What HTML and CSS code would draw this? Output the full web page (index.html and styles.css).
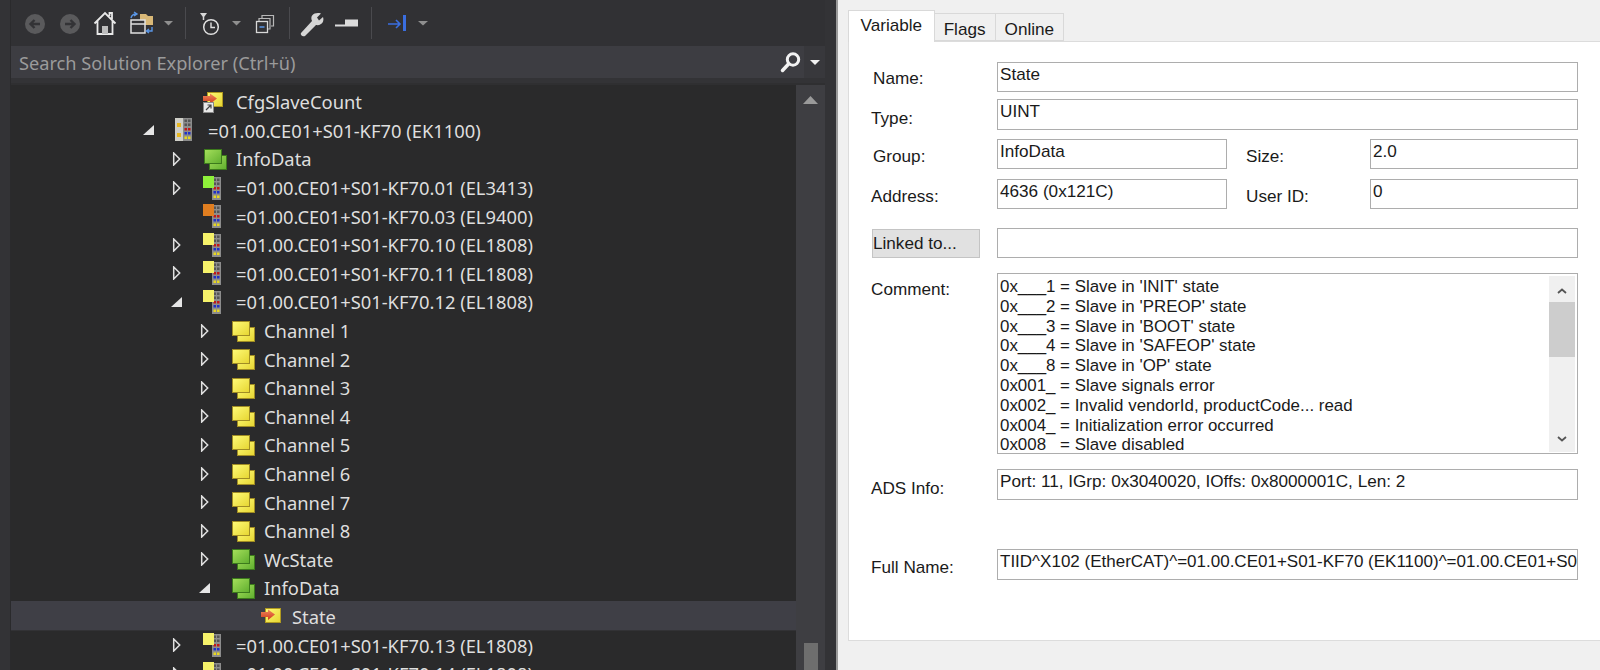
FILE: index.html
```html
<!DOCTYPE html>
<html lang="en">
<head>
<meta charset="utf-8">
<title>Solution Explorer</title>
<link rel="stylesheet" href="styles.css">
</head>
<body>
<svg class="defs" width="0" height="0" aria-hidden="true">
  <defs>
    <linearGradient id="gy" x1="0" y1="0" x2="1" y2="1"><stop offset="0" stop-color="#fffb78"/><stop offset="1" stop-color="#e6d531"/></linearGradient>
    <linearGradient id="gg" x1="0" y1="0" x2="1" y2="1"><stop offset="0" stop-color="#a6e05c"/><stop offset="1" stop-color="#5fae2e"/></linearGradient>
    <linearGradient id="gr" x1="0" y1="0" x2="0" y2="1"><stop offset="0" stop-color="#f08a5c"/><stop offset="1" stop-color="#d0381c"/></linearGradient>
    <g id="arrow-open"><path d="M11 2 V12 H0 Z" fill="#e6e6e6"/></g>
    <g id="arrow-closed"><path d="M2.700 1 L8.700 7 L2.700 13 Z" fill="none" stroke="#e0e0e0" stroke-width="1.500"/></g>
    <g id="stack-y">
      <rect x="6.500" y="8.500" width="17" height="14" fill="url(#gy)" stroke="#a08c24"/>
      <rect x="1.500" y="2.500" width="17" height="14" fill="url(#gy)" stroke="#a08c24"/>
    </g>
    <g id="stack-g">
      <rect x="6.500" y="8.500" width="17" height="14" fill="url(#gg)" stroke="#3c7a1c"/>
      <rect x="1.500" y="2.500" width="17" height="14" fill="url(#gg)" stroke="#3c7a1c"/>
    </g>
    <g id="strip">
      <rect x="9" y="1" width="9" height="23" fill="#8c8c8c"/>
      <rect x="10.500" y="2.500" width="2.500" height="2.500" fill="#555"/><rect x="14" y="2.500" width="2.500" height="2.500" fill="#555"/>
      <rect x="10.500" y="6.500" width="2.500" height="2.500" fill="#555"/><rect x="14" y="6.500" width="2.500" height="2.500" fill="#555"/>
      <rect x="10.500" y="11" width="2.500" height="2.500" fill="#c01818"/><rect x="14" y="11" width="2.500" height="2.500" fill="#c01818"/>
      <rect x="10.500" y="15" width="2.500" height="2.500" fill="#2030c8"/><rect x="14" y="15" width="2.500" height="2.500" fill="#2030c8"/>
      <rect x="10.500" y="19.500" width="2.500" height="2.500" fill="#e8d820"/><rect x="14" y="19.500" width="2.500" height="2.500" fill="#e8d820"/>
    </g>
    <g id="term-y"><use href="#strip"/><rect x="0" y="0" width="11" height="12" fill="#f6f26a"/></g>
    <g id="term-g"><use href="#strip"/><rect x="0" y="0" width="11" height="12" fill="#8ff03a"/></g>
    <g id="term-o"><use href="#strip"/><rect x="0" y="0" width="11" height="12" fill="#e07e20"/></g>
    <g id="term-ek">
      <rect x="0" y="0" width="8" height="23" fill="#cfcfc8"/>
      <rect x="2" y="5" width="4" height="4" fill="#e8b820"/><rect x="2" y="15" width="4" height="4" fill="#e8b820"/>
      <use href="#strip" x="-1" y="-1"/>
    </g>
    <g id="var">
      <rect x="4.500" y="2.500" width="15" height="14" fill="url(#gy)" stroke="#b09a20"/>
      <path d="M0 6 H7 V3.500 L14 8.500 L7 14 V11 H0 Z" fill="url(#gr)"/>
    </g>
  </defs>
</svg>
<div class="app">
  <section class="left">
    <div class="explorer">
      <div class="toolbar">
        <svg width="34" height="32" viewBox="0 0 34 32"><circle cx="11" cy="17" r="10" fill="#5a5a5c"/><path d="M16 17 H7 M10.500 13 L6.500 17 L10.500 21" fill="none" stroke="#333336" stroke-width="2.400"/></svg>
        <svg width="34" height="32" viewBox="0 0 34 32"><circle cx="12" cy="17" r="10" fill="#5a5a5c"/><path d="M7 17 H16 M12.500 13 L16.500 17 L12.500 21" fill="none" stroke="#333336" stroke-width="2.400"/></svg>
        <svg width="36" height="32" viewBox="0 0 36 32"><path d="M2.500 16.500 L13 6 L23.500 16.500 M5.500 14 V27 H20.500 V14 M17.500 9 V6 H20 V12" fill="none" stroke="#e8e8e8" stroke-width="1.800"/><rect x="10" y="19" width="6" height="8" fill="#bdbdbd"/></svg>
        <svg width="32" height="32" viewBox="0 0 32 32"><path d="M12 7 H18 L20 9 H25 V18 H12 Z" fill="#d9b877"/><rect x="3" y="13" width="14" height="13" fill="#333336" stroke="#e0e0e0" stroke-width="1.500"/><path d="M3 17 H17" stroke="#e0e0e0" stroke-width="1.500"/><path d="M3 11 Q4 7 8 7 M6 5 L9 7 L6 9" fill="none" stroke="#5a96e6" stroke-width="1.400"/><path d="M24 20 V24 H19 M21 22 L18.500 24 L21 26" fill="none" stroke="#5a96e6" stroke-width="1.400"/></svg>
        <svg width="18" height="32" viewBox="0 0 18 32"><path d="M4 14 H13 L8.500 18.500 Z" fill="#8f8f8f"/></svg>
        <span class="sep"></span>
        <svg width="32" height="32" viewBox="0 0 32 32"><path d="M4 6 H11 L8.500 9.500 H6.500 Z" fill="#d8d8d8"/><path d="M7.500 9 V13" stroke="#d8d8d8" stroke-width="1.500"/><circle cx="15" cy="20" r="7.300" fill="none" stroke="#e0e0e0" stroke-width="1.500"/><path d="M15 15.500 V20.500 H19" fill="none" stroke="#e0e0e0" stroke-width="1.400"/></svg>
        <svg width="22" height="32" viewBox="0 0 22 32"><path d="M4 14 H13 L8.500 18.500 Z" fill="#8f8f8f"/></svg>
        <svg width="32" height="32" viewBox="0 0 32 32"><rect x="6.500" y="14.500" width="11" height="11" fill="none" stroke="#d8d8d8" stroke-width="1.300"/><path d="M9 14 V11.500 H20 V22 H18 M12 11 V8.500 H23.500 V19 H21" fill="none" stroke="#b8b8b8" stroke-width="1.200"/><path d="M9.500 20 H14.500" stroke="#5a96e6" stroke-width="1.500"/></svg>
        <span class="sep sep-n"></span>
        <svg width="34" height="32" viewBox="0 0 34 32"><path d="M5 26 L16 14 C14 9 17 6 22 6 C24 6 25 6.500 25 6.500 L21 10.500 L23 13.500 L27 10 C28.500 14 26 19 20 18 L9 29 C7 30 4 28 5 26 Z" fill="#d6d6d6"/></svg>
        <svg width="34" height="32" viewBox="0 0 34 32"><path d="M5 17.500 H15 V12.500 H28 V19.500 H5 Z" fill="#dcdcdc"/></svg>
        <span class="sep sep-n"></span>
        <svg width="36" height="32" viewBox="0 0 36 32"><path d="M10 17 H22 M18 13 L22 17 L18 21" fill="none" stroke="#3a6ee0" stroke-width="1.600"/><rect x="25" y="8" width="3" height="16" fill="#3a6ee0"/></svg>
        <svg width="18" height="32" viewBox="0 0 18 32"><path d="M4 14 H14 L9 18.500 Z" fill="#8f8f8f"/></svg>
      </div>
      <div class="search">
        <span class="search-text">Search Solution Explorer (Ctrl+ü)</span>
        <svg class="search-icon" width="22" height="22" viewBox="0 0 22 22"><circle cx="13" cy="8.500" r="5.700" fill="none" stroke="#f2f2f2" stroke-width="3"/><path d="M8.500 13 L2.500 19.500" stroke="#f2f2f2" stroke-width="3.500" stroke-linecap="round"/></svg>
        <span class="search-drop"><svg width="10" height="5" viewBox="0 0 10 5"><path d="M0 0 H10 L5 5 Z" fill="#f2f2f2"/></svg></span>
      </div>
      <div class="tree-wrap">
        <ul class="tree">
          <li class="row d1"><span class="tw"></span><span class="ic"><svg width="26" height="24" viewBox="0 0 26 24"><use href="#var"/><rect x="0.500" y="12.500" width="10" height="10" fill="#e8e8e8" stroke="#8a8a8a"/><path d="M3 20 L8 15 M4.500 15 H8 V18.500" fill="none" stroke="#444" stroke-width="1.200"/></svg></span><span class="lbl">CfgSlaveCount</span></li>
          <li class="row d0"><span class="tw"><svg width="12" height="14" viewBox="0 0 12 14"><use href="#arrow-open"/></svg></span><span class="ic"><svg width="20" height="24" viewBox="0 0 20 24"><use href="#term-ek"/></svg></span><span class="lbl">=01.00.CE01+S01-KF70 (EK1100)</span></li>
          <li class="row d1"><span class="tw"><svg width="12" height="14" viewBox="0 0 12 14"><use href="#arrow-closed"/></svg></span><span class="ic"><svg width="26" height="24" viewBox="0 0 26 24"><use href="#stack-g"/></svg></span><span class="lbl">InfoData</span></li>
          <li class="row d1"><span class="tw"><svg width="12" height="14" viewBox="0 0 12 14"><use href="#arrow-closed"/></svg></span><span class="ic"><svg width="20" height="24" viewBox="0 0 20 24"><use href="#term-g"/></svg></span><span class="lbl">=01.00.CE01+S01-KF70.01 (EL3413)</span></li>
          <li class="row d1"><span class="tw"></span><span class="ic"><svg width="20" height="24" viewBox="0 0 20 24"><use href="#term-o"/></svg></span><span class="lbl">=01.00.CE01+S01-KF70.03 (EL9400)</span></li>
          <li class="row d1"><span class="tw"><svg width="12" height="14" viewBox="0 0 12 14"><use href="#arrow-closed"/></svg></span><span class="ic"><svg width="20" height="24" viewBox="0 0 20 24"><use href="#term-y"/></svg></span><span class="lbl">=01.00.CE01+S01-KF70.10 (EL1808)</span></li>
          <li class="row d1"><span class="tw"><svg width="12" height="14" viewBox="0 0 12 14"><use href="#arrow-closed"/></svg></span><span class="ic"><svg width="20" height="24" viewBox="0 0 20 24"><use href="#term-y"/></svg></span><span class="lbl">=01.00.CE01+S01-KF70.11 (EL1808)</span></li>
          <li class="row d1"><span class="tw"><svg width="12" height="14" viewBox="0 0 12 14"><use href="#arrow-open"/></svg></span><span class="ic"><svg width="20" height="24" viewBox="0 0 20 24"><use href="#term-y"/></svg></span><span class="lbl">=01.00.CE01+S01-KF70.12 (EL1808)</span></li>
          <li class="row d2"><span class="tw"><svg width="12" height="14" viewBox="0 0 12 14"><use href="#arrow-closed"/></svg></span><span class="ic"><svg width="26" height="24" viewBox="0 0 26 24"><use href="#stack-y"/></svg></span><span class="lbl">Channel 1</span></li>
          <li class="row d2"><span class="tw"><svg width="12" height="14" viewBox="0 0 12 14"><use href="#arrow-closed"/></svg></span><span class="ic"><svg width="26" height="24" viewBox="0 0 26 24"><use href="#stack-y"/></svg></span><span class="lbl">Channel 2</span></li>
          <li class="row d2"><span class="tw"><svg width="12" height="14" viewBox="0 0 12 14"><use href="#arrow-closed"/></svg></span><span class="ic"><svg width="26" height="24" viewBox="0 0 26 24"><use href="#stack-y"/></svg></span><span class="lbl">Channel 3</span></li>
          <li class="row d2"><span class="tw"><svg width="12" height="14" viewBox="0 0 12 14"><use href="#arrow-closed"/></svg></span><span class="ic"><svg width="26" height="24" viewBox="0 0 26 24"><use href="#stack-y"/></svg></span><span class="lbl">Channel 4</span></li>
          <li class="row d2"><span class="tw"><svg width="12" height="14" viewBox="0 0 12 14"><use href="#arrow-closed"/></svg></span><span class="ic"><svg width="26" height="24" viewBox="0 0 26 24"><use href="#stack-y"/></svg></span><span class="lbl">Channel 5</span></li>
          <li class="row d2"><span class="tw"><svg width="12" height="14" viewBox="0 0 12 14"><use href="#arrow-closed"/></svg></span><span class="ic"><svg width="26" height="24" viewBox="0 0 26 24"><use href="#stack-y"/></svg></span><span class="lbl">Channel 6</span></li>
          <li class="row d2"><span class="tw"><svg width="12" height="14" viewBox="0 0 12 14"><use href="#arrow-closed"/></svg></span><span class="ic"><svg width="26" height="24" viewBox="0 0 26 24"><use href="#stack-y"/></svg></span><span class="lbl">Channel 7</span></li>
          <li class="row d2"><span class="tw"><svg width="12" height="14" viewBox="0 0 12 14"><use href="#arrow-closed"/></svg></span><span class="ic"><svg width="26" height="24" viewBox="0 0 26 24"><use href="#stack-y"/></svg></span><span class="lbl">Channel 8</span></li>
          <li class="row d2"><span class="tw"><svg width="12" height="14" viewBox="0 0 12 14"><use href="#arrow-closed"/></svg></span><span class="ic"><svg width="26" height="24" viewBox="0 0 26 24"><use href="#stack-g"/></svg></span><span class="lbl">WcState</span></li>
          <li class="row d2"><span class="tw"><svg width="12" height="14" viewBox="0 0 12 14"><use href="#arrow-open"/></svg></span><span class="ic"><svg width="26" height="24" viewBox="0 0 26 24"><use href="#stack-g"/></svg></span><span class="lbl">InfoData</span></li>
          <li class="row d3 selected"><span class="tw"></span><span class="ic"><svg width="26" height="24" viewBox="0 0 26 24"><use href="#var" x="2" y="2"/></svg></span><span class="lbl">State</span></li>
          <li class="row d1"><span class="tw"><svg width="12" height="14" viewBox="0 0 12 14"><use href="#arrow-closed"/></svg></span><span class="ic"><svg width="20" height="24" viewBox="0 0 20 24"><use href="#term-y"/></svg></span><span class="lbl">=01.00.CE01+S01-KF70.13 (EL1808)</span></li>
          <li class="row d1"><span class="tw"><svg width="12" height="14" viewBox="0 0 12 14"><use href="#arrow-closed"/></svg></span><span class="ic"><svg width="20" height="24" viewBox="0 0 20 24"><use href="#term-y"/></svg></span><span class="lbl">=01.00.CE01+S01-KF70.14 (EL1808)</span></li>
        </ul>
        <div class="vscroll">
          <svg class="vs-up" width="15" height="8" viewBox="0 0 15 8"><path d="M7.500 0 L15 8 H0 Z" fill="#9a9a9a"/></svg>
          <span class="vs-thumb"></span>
        </div>
      </div>
    </div>
  </section>
  <section class="right">
    <div class="tabs">
      <span class="tab active">Variable</span>
      <span class="tab">Flags</span>
      <span class="tab">Online</span>
    </div>
    <div class="panel">
      <div class="frow r-name"><label class="flabel in2 mid">Name:</label><div class="field grow">State</div></div>
      <div class="frow r-type"><label class="flabel lower">Type:</label><div class="field grow">UINT</div></div>
      <div class="frow r-group">
        <label class="flabel in2 low">Group:</label><div class="field half">InfoData</div>
        <label class="flabel2 low">Size:</label><div class="field grow">2.0</div>
      </div>
      <div class="frow r-addr">
        <label class="flabel low">Address:</label><div class="field half">4636 (0x121C)</div>
        <label class="flabel2 low">User ID:</label><div class="field grow">0</div>
      </div>
      <div class="frow r-link"><div class="linkcol"><button class="linkbtn" type="button">Linked to...</button></div><div class="field grow"></div></div>
      <div class="frow r-comment">
        <label class="flabel top">Comment:</label>
        <div class="field grow memo">
          <div class="memo-text">0x___1 = Slave in 'INIT' state
0x___2 = Slave in 'PREOP' state
0x___3 = Slave in 'BOOT' state
0x___4 = Slave in 'SAFEOP' state
0x___8 = Slave in 'OP' state
0x001_ = Slave signals error
0x002_ = Invalid vendorId, productCode... read
0x004_ = Initialization error occurred
0x008   = Slave disabled</div>
          <div class="memo-bar">
            <svg class="mb-up" width="10" height="6" viewBox="0 0 10 6"><path d="M1 5 L5 1.500 L9 5" fill="none" stroke="#555" stroke-width="1.800"/></svg>
            <span class="mb-thumb"></span>
            <svg class="mb-down" width="10" height="6" viewBox="0 0 10 6"><path d="M1 1 L5 4.500 L9 1" fill="none" stroke="#555" stroke-width="1.800"/></svg>
          </div>
        </div>
      </div>
      <div class="frow r-ads"><label class="flabel lower">ADS Info:</label><div class="field grow">Port: 11, IGrp: 0x3040020, IOffs: 0x8000001C, Len: 2</div></div>
      <div class="frow r-full"><label class="flabel low">Full Name:</label><div class="field grow clip">TIID^X102 (EtherCAT)^=01.00.CE01+S01-KF70 (EK1100)^=01.00.CE01+S01-KF70.12 (EL1808)^InfoData^State</div></div>
    </div>
  </section>
</div>
</body>
</html>
```
FILE: styles.css
```css
* { box-sizing: border-box; }
html, body { margin: 0; padding: 0; height: 100%; overflow: hidden; background: #f0f0f0; }
.defs { position: absolute; }
.app { display: flex; width: 1600px; height: 670px; overflow: hidden; }

/* left dark pane */
.left { width: 838px; flex: none; height: 670px; background: #333336; padding: 0 11px 0 10px; border-right: 2px solid #9a9a9a; }
.explorer { height: 100%; border-left: 1px solid #2a2a2c; display: flex; flex-direction: column; }
.toolbar { height: 46px; flex: none; display: flex; align-items: center; padding-left: 13px; background: #313134; }
.toolbar svg { flex: none; display: block; }
.sep { width: 18px; height: 32px; flex: none; position: relative; }
.sep::before { content: ""; display: block; width: 1px; height: 32px; margin-left: 7px; background: #4a4a4e; }
.sep-n { width: 14px; }

.search { height: 32px; flex: none; display: flex; align-items: center; background: #3d3d42; color: #9b9b9b; font: 18.200px/32px "Noto Sans", sans-serif; padding-left: 8px; }
.search-text { flex: 1; white-space: nowrap; padding-top: 1px; }
.search-icon { flex: none; margin-right: 2px; }
.search-drop { width: 21px; height: 32px; flex: none; background: #38383c; display: flex; align-items: center; justify-content: center; }
.search-drop svg { display: block; }

.tree-wrap { flex: 1; min-height: 0; display: flex; margin-top: 5px; border-top: 2px solid #2f2f31; background: #2a2a2b; overflow: hidden; }
.tree { flex: 1; min-width: 0; margin: 0; padding: 1px 0 0; list-style: none; overflow: hidden; color: #dedede; font: 18.350px "Noto Sans", sans-serif; }
.row { height: 28.600px; display: flex; align-items: center; white-space: nowrap; padding-top: 3px; }
.d0 { padding-left: 132px; }
.d1 { padding-left: 160px; }
.d2 { padding-left: 188px; }
.d3 { padding-left: 216px; }
.tw { width: 32px; flex: none; display: flex; align-items: center; }
.tw svg { display: block; }
.ic { width: 33px; flex: none; display: flex; align-items: center; height: 24px; }
.ic svg { display: block; overflow: visible; }
.lbl { display: block; line-height: 24px; padding-top: 1px; }
.selected { background: #3f3f46; box-shadow: 0 1.400px 0 #3f3f46; }

.vscroll { width: 29px; flex: none; background: #3e3e42; display: flex; flex-direction: column; align-items: center; padding-top: 11px; }
.vs-up { display: block; flex: none; }
.vs-thumb { display: block; width: 14px; height: 27px; margin-top: auto; background: #6e6e6e; }

/* right light pane */
.right { flex: 1; min-width: 0; padding: 10px 0 0 10px; background: #f0f0f0; color: #1a1a1a; font: 17.150px "Liberation Sans", Arial, sans-serif; }
.tabs { display: flex; align-items: flex-end; height: 31px; position: relative; z-index: 1; }
.tab { height: 28px; padding: 0 9px; line-height: 30px; background: #f0f0f0; border: 1px solid #d9d9d9; border-bottom: 1px solid #d9d9d9; border-left: 0; }
.tab.active { height: 32px; margin-bottom: -1px; padding: 0 11.500px; line-height: 28px; background: #fff; border: 1px solid #d9d9d9; border-bottom: 0; }
.panel { height: 600px; background: #fff; border: 1px solid #dcdcdc; border-right: 0; padding: 20px 22px 0 22px; }

.frow { display: flex; align-items: center; }
.r-name { height: 30px; }
.r-type { height: 31px; margin-top: 7px; }
.r-group { height: 30px; margin-top: 9px; }
.r-addr { height: 30px; margin-top: 10px; }
.r-link { height: 30px; margin-top: 19px; }
.r-comment { height: 181px; margin-top: 15px; align-items: flex-start; }
.r-ads { height: 31px; margin-top: 15px; }
.r-full { height: 31px; margin-top: 49px; }

.flabel { width: 126px; flex: none; }
.flabel.in2 { padding-left: 2px; }
.flabel.mid { padding-top: 2px; }
.flabel.low { padding-top: 5px; }
.flabel.lower { padding-top: 7px; }
.flabel.top { padding-top: 6px; }
.flabel2 { width: 143px; flex: none; padding-left: 19px; }
.flabel2.low { padding-top: 5px; }
.linkcol { width: 126px; flex: none; padding-left: 1px; }
.linkbtn { display: block; width: 108px; height: 29px; padding: 0; text-align: left; background: #e1e1e1; border: 1px solid #c4c4c4; color: #1a1a1a; font: inherit; }

.field { height: 100%; border: 1.500px solid #adadad; background: #fff; padding: 0 1px 0 2px; line-height: 23px; white-space: nowrap; overflow: hidden; }
.field.clip { font-size: 17px; }
.grow { flex: 1; min-width: 0; }
.half { width: 230px; flex: none; }

.memo { position: relative; display: flex; padding: 0; overflow: visible; }
.memo-text { flex: 1; min-width: 0; height: 100%; overflow: visible; padding: 3px 0 0 2px; line-height: 19.800px; white-space: pre; font-size: 16.900px; }
.memo-bar { width: 26px; flex: none; margin-right: 2px; margin-top: 2px; background: #f0f0f0; display: flex; flex-direction: column; align-items: center; height: 176px; }
.memo-bar svg { display: block; flex: none; }
.mb-up { margin-top: 12px; }
.mb-thumb { display: block; width: 26px; height: 55px; margin-top: 8px; background: #cdcdcd; }
.mb-down { margin-top: auto; margin-bottom: 10px; }
```
